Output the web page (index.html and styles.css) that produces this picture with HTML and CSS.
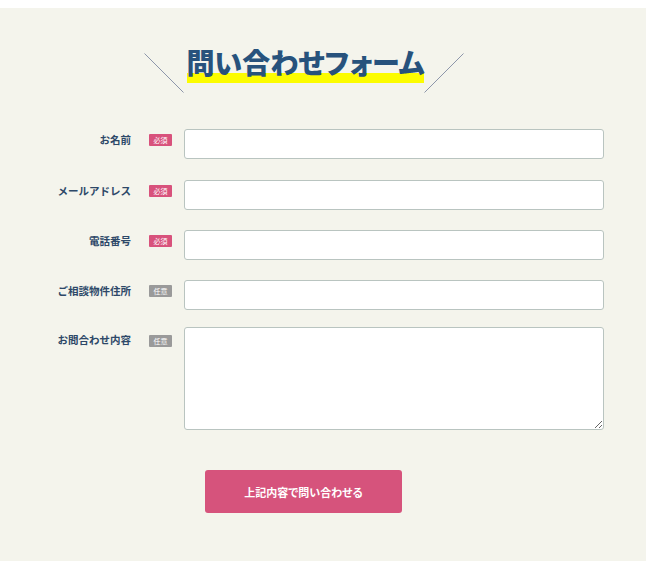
FILE: index.html
```html
<!DOCTYPE html>
<html lang="ja">
<head>
<meta charset="utf-8">
<title>お問い合わせフォーム</title>
<link rel="stylesheet" href="styles.css">
</head>
<body>
<div class="page">
  <div class="container">
    <div class="heading">
      <svg class="deco" width="40" height="40" viewBox="0 0 40 40"><line x1="0.5" y1="0.5" x2="39.5" y2="39.5" stroke="#8d96aa" stroke-width="1"/></svg>
      <h1 class="title">問い合わせフォーム</h1>
      <svg class="deco" width="40" height="40" viewBox="0 0 40 40"><line x1="39.5" y1="0.5" x2="0.5" y2="39.5" stroke="#8d96aa" stroke-width="1"/></svg>
    </div>
    <form class="form">
      <div class="row">
        <label class="label">お名前</label>
        <span class="badge req">必須</span>
        <input class="field" type="text">
      </div>
      <div class="row">
        <label class="label">メールアドレス</label>
        <span class="badge req">必須</span>
        <input class="field" type="text">
      </div>
      <div class="row">
        <label class="label">電話番号</label>
        <span class="badge req">必須</span>
        <input class="field" type="text">
      </div>
      <div class="row">
        <label class="label">ご相談物件住所</label>
        <span class="badge opt">任意</span>
        <input class="field" type="text">
      </div>
      <div class="row row-area">
        <label class="label">お問合わせ内容</label>
        <span class="badge opt">任意</span>
        <textarea class="field area"></textarea>
      </div>
      <div class="actions">
        <button type="button" class="submit">上記内容で問い合わせる</button>
      </div>
    </form>
  </div>
</div>
</body>
</html>
```
FILE: styles.css
```css
* { box-sizing: border-box; }
html, body { margin: 0; padding: 0; background: #ffffff; }
body {
  padding-top: 8px;
  font-family: "Noto Sans CJK JP", "Noto Sans", sans-serif;
}
.page {
  background: #f4f4ec;
  min-height: 553px;
}
.container {
  width: 608px;
  padding-top: 40px;
}
.heading {
  display: flex;
  justify-content: center;
  align-items: flex-start;
  margin-bottom: 36px;
}
.deco {
  display: block;
  margin-top: 5px;
}
.title {
  margin: 0 0 0 3px;
  font-size: 28px;
  line-height: 28px;
  font-weight: 900;
  color: #27527c;
  font-feature-settings: "palt";
  letter-spacing: 0;
  padding-bottom: 7px;
  background: linear-gradient(#fcfc00, #fcfc00) no-repeat left bottom / 100% 10px;
  white-space: nowrap;
}
.form { display: block; }
.row {
  display: flex;
  align-items: flex-start;
  margin-bottom: 20px;
}
.row:first-child { margin-bottom: 21px; }
.row-area { margin-top: -3px; }
.label {
  width: 131px;
  text-align: right;
  font-size: 10.5px;
  line-height: 13px;
  font-weight: 700;
  color: #2d4868;
  margin-top: 4px;
  margin-right: 18px;
  white-space: nowrap;
}
.row-area .label { margin-top: 6px; }
.badge {
  width: 23px;
  height: 12px;
  margin-top: 5px;
  margin-right: 12px;
  font-size: 7px;
  line-height: 12px;
  color: #ffffff;
  text-align: center;
  border-radius: 1px;
  flex: none;
}
.row-area .badge { margin-top: 8px; }
.req { background: #d8527c; }
.opt { background: #9a9a9a; }
.field {
  display: block;
  width: 420px;
  height: 30px;
  margin: 0;
  border: 1px solid #b9c4c0;
  border-radius: 3px;
  background: #ffffff;
  font-family: inherit;
  font-size: 13px;
  padding: 4px 8px;
}
.area {
  height: 103px;
  resize: vertical;
}
.actions {
  padding-left: 205px;
  padding-top: 20px;
}
.submit {
  display: block;
  width: 197px;
  height: 43px;
  border: none;
  border-radius: 3px;
  background: #d6537c;
  color: #ffffff;
  font-family: inherit;
  font-size: 11px;
  font-weight: 700;
  font-feature-settings: "palt";
  cursor: pointer;
  padding: 0;
}
```
